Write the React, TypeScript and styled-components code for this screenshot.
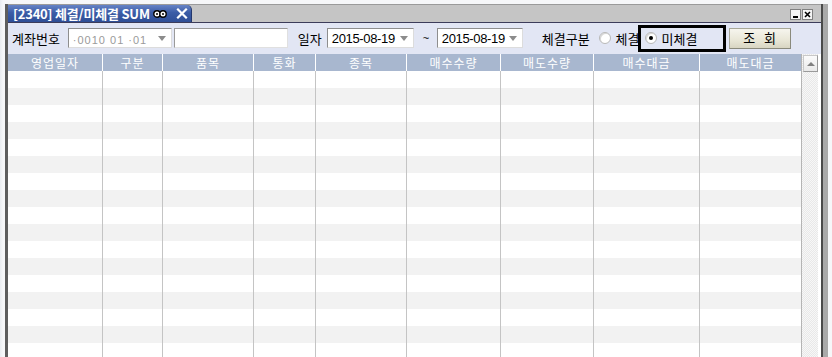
import React from "react";
import styled, { createGlobalStyle } from "styled-components";

const Global = createGlobalStyle`
  html, body { margin: 0; padding: 0; }
  body {
    background: #f3f5f8;
    font-family: "Noto Sans CJK KR", "Liberation Sans", sans-serif;
    overflow: hidden;
  }
  #root { height: 357px; overflow: hidden; }
`;

const Desktop = styled.div`
  height: 357px;
  padding: 4px 0 0 5px;
  box-sizing: border-box;
  overflow: hidden;
  background: linear-gradient(90deg, #e9ecf0 0, #f6f7f9 3px, #f6f7f9 100%);
`;

const Window = styled.div`
  width: 813px;
  height: 360px;
  border-left: 3px solid #5e5e5e;
  border-right: 2px solid #4a4a4a;
  box-shadow: 5px 0 0 #a9a9a9;
  background: #e2e6f4;
  display: flex;
  flex-direction: column;
`;

const TitleBar = styled.div`
  height: 18px;
  display: flex;
  align-items: stretch;
  background: #c5c5c5;
  border-top: 1px solid #9a9a9a;
  box-sizing: border-box;
`;

const Tab = styled.div`
  width: 184px;
  display: flex;
  align-items: center;
  gap: 3px;
  padding-left: 5px;
  box-sizing: border-box;
  background: linear-gradient(#6683c6, #3b5ca6 45%, #2f4e96);
  border-top-right-radius: 5px;
  border-right: 1px solid #24386e;
  color: #fff;
  font-size: 13px;
  font-weight: bold;
  line-height: 17px;
  white-space: nowrap;
`;

const TabText = styled.span`
  letter-spacing: -0.2px;
`;

const TitleSpacer = styled.div`
  flex: 1;
`;

const WinButtons = styled.div`
  display: flex;
  gap: 1px;
  align-items: center;
  padding-right: 8px;
  padding-top: 1px;
`;

const WinButton = styled.div`
  width: 9px;
  height: 9px;
  background: #f4f4f4;
  border: 1px solid #808080;
  display: flex;
  align-items: center;
  justify-content: center;
`;

const Toolbar = styled.div`
  height: 31px;
  border-top: 1px solid #3c3c5a;
  box-sizing: border-box;
  display: flex;
  align-items: center;
  padding-left: 4px;
  font-size: 13px;
  color: #000;
  white-space: nowrap;
  & > * { flex-shrink: 0; }
`;

const Label = styled.span<{ $ml?: number }>`
  margin-left: ${(p) => p.$ml ?? 0}px;
  white-space: nowrap;
  line-height: 15px;
`;

const Combo = styled.div<{ $w: number; $ml: number }>`
  width: ${(p) => p.$w}px;
  height: 20px;
  margin-left: ${(p) => p.$ml}px;
  box-sizing: border-box;
  background: #fff;
  border: 1px solid #8e8e8e;
  border-right-color: #dcdcdc;
  border-bottom-color: #dcdcdc;
  display: flex;
  align-items: center;
  padding-left: 4px;
  font-family: "Liberation Sans", sans-serif;
  font-size: 13px;
  white-space: nowrap;
`;

const ComboText = styled.span<{ $faded?: boolean }>`
  flex: 1;
  color: ${(p) => (p.$faded ? "#9a9a9a" : "#000")};
  letter-spacing: ${(p) => (p.$faded ? "1px" : "-0.35px")};
  font-size: ${(p) => (p.$faded ? "11px" : "13px")};
  padding-top: ${(p) => (p.$faded ? "4px" : "0")};
`;

const Arrow = styled.span`
  width: 0;
  height: 0;
  border-left: 4px solid transparent;
  border-right: 4px solid transparent;
  border-top: 5px solid #8c8c8c;
  margin-right: 5px;
  flex-shrink: 0;
`;

const Field = styled.div`
  width: 114px;
  height: 20px;
  margin-left: 2px;
  box-sizing: border-box;
  background: #fff;
  border: 1px solid #9a9a9a;
  border-right-color: #e0e0e0;
  border-bottom-color: #e0e0e0;
`;

const Tilde = styled.span`
  margin-left: 9px;
  font-family: "Liberation Sans", sans-serif;
  font-size: 11px;
  width: 8px;
`;

const Radio = styled.span<{ $on?: boolean }>`
  width: 10px;
  height: 10px;
  border-radius: 50%;
  background: #fff;
  border: 1px solid #b8b8b8;
  box-shadow: inset 1px 1px 0 #d8d8d8;
  display: inline-flex;
  align-items: center;
  justify-content: center;
  flex-shrink: 0;
  &::after {
    content: "";
    width: 4px;
    height: 4px;
    border-radius: 50%;
    background: ${(p) => (p.$on ? "#000" : "transparent")};
  }
`;

const RadioItem = styled.label<{ $ml: number }>`
  display: flex;
  align-items: center;
  gap: 5px;
  margin-left: ${(p) => p.$ml}px;
  white-space: nowrap;
`;

const Highlight = styled.div`
  width: 88px;
  height: 27px;
  margin-left: -2px;
  box-sizing: border-box;
  border: 3px solid #000;
  display: flex;
  align-items: center;
  padding-left: 4px;
`;

const Button = styled.button`
  width: 62px;
  height: 21px;
  margin-left: 3px;
  padding: 0;
  box-sizing: border-box;
  border: 1px solid #a8a898;
  border-right-color: #8a8a7c;
  border-bottom-color: #8a8a7c;
  background: linear-gradient(#f6f5ee, #e8e6d6 60%, #d8d5c2);
  font-family: "Noto Sans CJK KR", sans-serif;
  font-size: 13px;
  color: #000;
  white-space: pre;
  line-height: 18px;
`;

const COLS = [95, 60, 91, 62, 91, 94, 93, 106, 101];
const HEADERS = ["영업일자", "구분", "품목", "통화", "종목", "매수수량", "매도수량", "매수대금", "매도대금"];

const GridArea = styled.div`
  margin-top: 1px;
  display: flex;
  flex: 1;
  overflow: hidden;
  background: #fff;
`;

const Table = styled.div`
  width: 793px;
  display: grid;
  grid-template-columns: ${COLS.map((c) => c + "px").join(" ")};
  grid-auto-rows: 17px;
  align-content: start;
`;

const HeadCell = styled.div<{ $last?: boolean }>`
  height: 18px;
  background: #a8b7cf;
  color: #fff;
  font-size: 12px;
  line-height: 18px;
  text-align: center;
  letter-spacing: 1px;
  border-right: ${(p) => (p.$last ? "none" : "1px solid #fff")};
  box-sizing: border-box;
`;

const Cell = styled.div<{ $alt: boolean; $last?: boolean }>`
  background: ${(p) => (p.$alt ? "#f2f2f2" : "#fff")};
  border-right: ${(p) => (p.$last ? "none" : "1px solid #c4c4c4")};
  box-sizing: border-box;
`;

const HeadRow = styled.div`
  display: contents;
`;

const Scrollbar = styled.div`
  width: 17px;
  border-left: 1px solid #b4b4b4;
  box-sizing: border-box;
  background-color: #f4f4f4;
  background-image: repeating-conic-gradient(#e8e8e8 0 25%, #f7f7f7 0 50%);
  background-size: 2px 2px;
  display: flex;
  flex-direction: column;
`;

const ScrollUp = styled.div`
  height: 17px;
  margin: 1px 0 0 1px;
  box-sizing: border-box;
  background: linear-gradient(#fbfbfb, #e9e9e9);
  border: 1px solid #c8c8c8;
  border-right-color: #9a9a9a;
  border-bottom-color: #9a9a9a;
  display: flex;
  align-items: center;
  justify-content: center;
  &::after {
    content: "";
    border-left: 4px solid transparent;
    border-right: 4px solid transparent;
    border-bottom: 4px solid #808080;
  }
`;

const ROWS = 17;

export default function App() {
  return (
    <>
      <Global />
      <Desktop>
        <Window>
          <TitleBar>
            <Tab>
              <TabText>[2340] 체결/미체결 SUM</TabText>
              <svg width="14" height="10" viewBox="0 0 14 10">
                <circle cx="4" cy="5" r="3.2" fill="#fff" stroke="#000" strokeWidth="1.4" />
                <circle cx="10" cy="5" r="3.2" fill="#fff" stroke="#000" strokeWidth="1.4" />
                <circle cx="4" cy="5" r="1" fill="#000" />
                <circle cx="10" cy="5" r="1" fill="#000" />
              </svg>
              <svg width="12" height="11" viewBox="0 0 12 11" style={{ marginLeft: 6 }}>
                <path d="M2 1.5 L10 9.5 M10 1.5 L2 9.5" stroke="#fff" strokeWidth="2.2" strokeLinecap="square" />
              </svg>
            </Tab>
            <TitleSpacer />
            <WinButtons>
              <WinButton>
                <svg width="7" height="7" viewBox="0 0 7 7">
                  <rect x="1" y="5" width="5" height="2" fill="#000" />
                </svg>
              </WinButton>
              <WinButton>
                <svg width="7" height="7" viewBox="0 0 7 7">
                  <path d="M1 1 L6 6 M6 1 L1 6" stroke="#000" strokeWidth="1.6" />
                </svg>
              </WinButton>
            </WinButtons>
          </TitleBar>
          <Toolbar>
            <Label>계좌번호</Label>
            <Combo $w={104} $ml={8}>
              <ComboText $faded>·0010 01 ·01</ComboText>
              <Arrow />
            </Combo>
            <Field />
            <Label $ml={10}>일자</Label>
            <Combo $w={87} $ml={5}>
              <ComboText>2015-08-19</ComboText>
              <Arrow />
            </Combo>
            <Tilde>~</Tilde>
            <Combo $w={86} $ml={6}>
              <ComboText>2015-08-19</ComboText>
              <Arrow />
            </Combo>
            <Label $ml={19}>체결구분</Label>
            <RadioItem $ml={9}>
              <Radio />
              체결
            </RadioItem>
            <Highlight>
              <RadioItem $ml={0}>
                <Radio $on />
                미체결
              </RadioItem>
            </Highlight>
            <Button>{"조   회"}</Button>
          </Toolbar>
          <GridArea>
            <Table>
              <HeadRow>
                {HEADERS.map((h, i) => (
                  <HeadCell key={h} $last={i === HEADERS.length - 1}>
                    {h}
                  </HeadCell>
                ))}
              </HeadRow>
              {Array.from({ length: ROWS }).map((_, r) =>
                COLS.map((_, c) => (
                  <Cell key={r + "-" + c} $alt={r % 2 === 1} $last={c === COLS.length - 1} />
                ))
              )}
            </Table>
            <Scrollbar>
              <ScrollUp />
            </Scrollbar>
          </GridArea>
        </Window>
      </Desktop>
    </>
  );
}
